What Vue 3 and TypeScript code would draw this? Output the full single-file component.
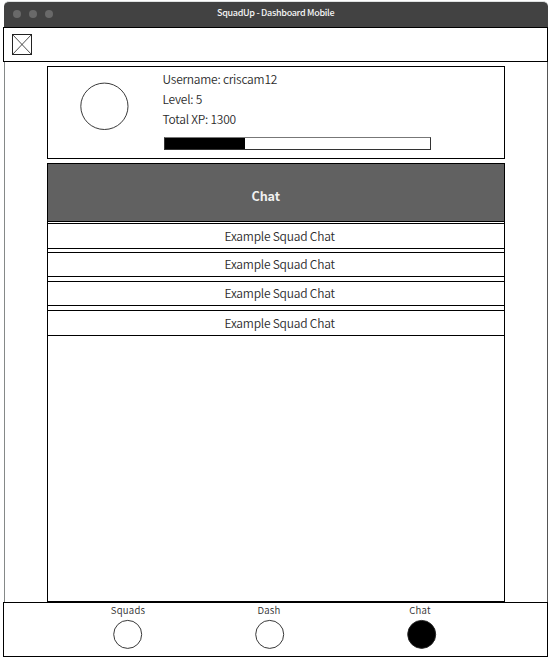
<script setup lang="ts">
interface NavItem {
  id: string
  label: string
  active: boolean
}

const user = { name: 'criscam12', level: 5, xp: 1300, progress: 30.2 }
const chats: string[] = Array.from({ length: 4 }, () => 'Example Squad Chat')
const nav: NavItem[] = [
  { id: 'squads', label: 'Squads', active: false },
  { id: 'dash', label: 'Dash', active: false },
  { id: 'chat', label: 'Chat', active: true },
]
</script>

<template>
  <div class="window">
    <div class="titlebar">
      <div class="dots"><i></i><i></i><i></i></div>
      <span class="title">SquadUp - Dashboard Mobile</span>
    </div>
    <header class="header">
      <svg class="logo" width="22" height="22" viewBox="0 0 22 22">
        <path d="M.5 .5L19.5 20.5M19.5 .5L.5 20.5" fill="none" stroke="#222" stroke-width=".8" />
        <rect x=".5" y=".5" width="19" height="20" fill="none" stroke="#222" />
      </svg>
    </header>
    <main class="body">
      <section class="profile">
        <svg class="avatar" width="50" height="50" viewBox="0 0 50 50">
          <ellipse cx="25.4" cy="25.3" rx="23.6" ry="23.2" fill="none" stroke="#222" stroke-width=".9" />
        </svg>
        <div class="info">
          <p>Username: {{ user.name }}</p>
          <p>Level: {{ user.level }}</p>
          <p>Total XP: {{ user.xp }}</p>
          <div class="bar"><div class="fill" :style="{ width: user.progress + '%' }"></div></div>
        </div>
      </section>
      <section class="panel">
        <h1 class="panel-title"><span>Chat</span></h1>
        <ul class="chats">
          <li v-for="(chat, i) in chats" :key="i"><span>{{ chat }}</span></li>
        </ul>
      </section>
    </main>
    <nav class="nav">
      <div v-for="item in nav" :key="item.id" class="nav-item" :class="item.id">
        <span>{{ item.label }}</span>
        <svg width="30" height="30" viewBox="0 0 30 30">
          <circle cx="14.7" cy="15.4" r="14" :fill="item.active ? '#000' : '#fff'" stroke="#222" stroke-width=".9" />
        </svg>
      </div>
    </nav>
  </div>
</template>

<style>
body {
  background: #fff;
}
</style>

<style scoped>
* {
  box-sizing: border-box;
  margin: 0;
  padding: 0;
}
.window {
  width: 548px;
  height: 663px;
  padding: 1px 0 0 3px;
  display: flex;
  flex-direction: column;
  font-family: "Noto Sans CJK SC", "Open Sans", sans-serif;
  font-size: 12px;
  font-weight: 350;
  letter-spacing: -0.23px;
  color: #2c2c2c;
}
.titlebar {
  height: 26px;
  margin-left: 1px;
  border-top: 1px solid #dfe2e2;
  border-radius: 5px 5px 0 0;
  background: #424242;
  display: grid;
  grid-template-columns: 213px 1fr;
  flex: none;
}
.dots {
  display: flex;
  gap: 8px;
  padding: 8px 0 0 9px;
}
.dots i {
  width: 8px;
  height: 8px;
  border-radius: 50%;
  background: #696969;
}
.title {
  color: #f4f4f4;
  font-size: 9px;
  font-weight: 500;
  letter-spacing: -0.3px;
  line-height: 22px;
  white-space: nowrap;
}
.header {
  height: 35px;
  flex: none;
  border: 1px solid #000;
  padding: 6px 0 0 8px;
}
.logo {
  display: block;
}
.body {
  height: 540px;
  flex: none;
  margin-left: 1px;
  padding: 4px 42px 0 42px;
  border-left: 1px solid #858988;
  border-right: 1px solid #555;
}
.profile {
  height: 93px;
  border: 1px solid #000;
  display: flex;
}
.avatar {
  margin: 14px 0 0 31px;
  flex: none;
}
.info {
  padding: 2px 0 0 33.5px;
}
.info p {
  line-height: 20px;
  white-space: nowrap;
}
.bar {
  width: 267px;
  height: 13px;
  margin: 8px 0 0 1.5px;
  border: 1px solid #333;
  border-top-color: #777;
}
.fill {
  height: 100%;
  background: #000;
}
.panel {
  height: 439px;
  margin-top: 4px;
  border: 1px solid #000;
}
.panel-title {
  height: 58px;
  background: #616161;
  border-bottom: 1px solid #000;
  color: #f0f0f0;
  font-size: 12.6px;
  font-weight: 700;
  line-height: 20px;
  letter-spacing: -0.1px;
  padding: 22px 0 0 203.5px;
}
.chats {
  list-style: none;
  padding-top: 1px;
}
.chats li {
  height: 26px;
  border: solid #000;
  border-width: 1px 0;
  line-height: 23px;
  padding-left: 176.5px;
  margin-bottom: 4px;
  white-space: nowrap;
}
.chats li:nth-child(n + 2) {
  height: 25px;
  line-height: 21px;
}
.chats li:nth-child(2) {
  margin-top: -1px;
}
.chats li:nth-child(4) {
  height: 26px;
  line-height: 23px;
}
.nav {
  height: 55px;
  flex: none;
  border: 1px solid #000;
  display: flex;
  padding-left: 94px;
}
.nav-item {
  width: 60px;
  display: flex;
  flex-direction: column;
  align-items: center;
  font-size: 9.6px;
  letter-spacing: 0.25px;
}
.nav-item span {
  height: 16px;
  line-height: 14px;
}
.nav-item + .nav-item {
  margin-left: 82px;
}
.nav-item.nav-item.chat {
  margin-left: 92px;
}
.nav-item.dash span {
  margin-left: -2px;
}
.nav-item.chat span {
  margin-left: -4px;
}
.nav-item svg {
  display: block;
}
</style>
